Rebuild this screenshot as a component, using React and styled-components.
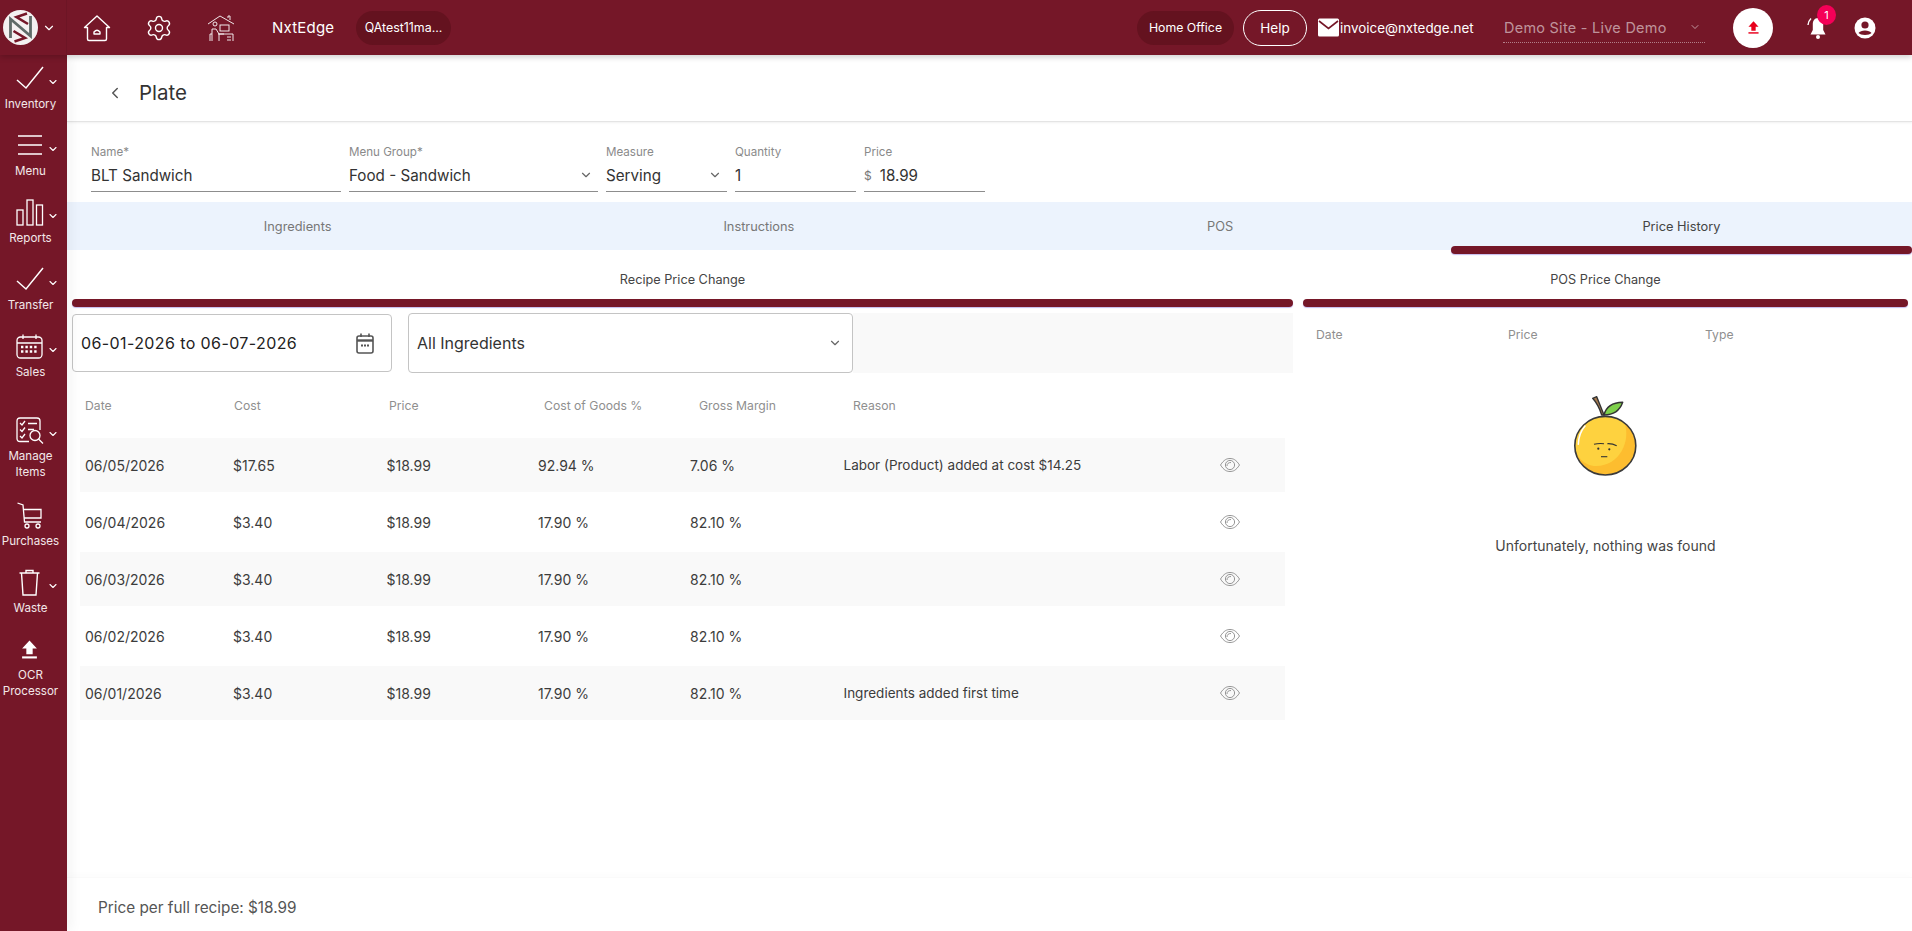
import React from "react";
import styled, { createGlobalStyle } from "styled-components";
import { ChevronDown, ChevronLeft, Settings } from "lucide-react";

const GlobalStyle = createGlobalStyle`
  html, body { margin: 0; padding: 0; height: 100%; background: #fff; }
  #root { height: 100%; }
  * { box-sizing: border-box; }
  body { font-family: "Inter", "Liberation Sans", sans-serif; color: #333; overflow: hidden; }
`;

const MAROON = "#751728";

const Page = styled.div`
  width: 1912px;
  height: 931px;
  display: grid;
  grid-template-columns: 67px 1fr;
  grid-template-rows: 55px 1fr;
`;

const TopBar = styled.header`
  grid-column: 1 / 3;
  background: ${MAROON};
  color: #fff;
  display: flex;
  align-items: center;
  box-shadow: 0 2px 6px rgba(0, 0, 0, 0.2);
  z-index: 2;
`;

const LogoBox = styled.div`
  width: 67px;
  height: 55px;
  display: flex;
  align-items: center;
  padding-left: 3px;
  gap: 4px;
  flex: none;
  border-right: 1px solid #6d1525;
`;

const TopIcons = styled.div`
  display: flex;
  align-items: center;
  gap: 34px;
  padding-left: 16px;
  width: 205px;
  flex: none;
`;

const Brand = styled.span`
  font-size: 15px;
  letter-spacing: 0.2px;
  width: 84px;
  flex: none;
`;

const Pill = styled.span`
  background: #64121f;
  border-radius: 17px;
  height: 34px;
  width: ${(p) => p.$w}px;
  display: inline-flex;
  align-items: center;
  justify-content: center;
  font-size: ${(p) => p.$size || 12}px;
  flex: none;
`;

const Spacer = styled.div`
  flex: 1;
`;

const HelpButton = styled.span`
  border: 1px solid #fff;
  border-radius: 18px;
  width: 64px;
  height: 36px;
  display: inline-flex;
  align-items: center;
  justify-content: center;
  font-size: 13.5px;
  margin-left: 9px;
  flex: none;
`;

const MailLink = styled.span`
  display: inline-flex;
  align-items: center;
  gap: 1px;
  font-size: 13.4px;
  margin-left: 11px;
  width: 185px;
  flex: none;
  white-space: nowrap;
`;

const SiteSelect = styled.div`
  width: 202px;
  height: 30px;
  display: flex;
  align-items: center;
  justify-content: space-between;
  padding: 0 4px 0 1px;
  border-bottom: 1px dotted rgba(255, 255, 255, 0.45);
  color: rgba(255, 255, 255, 0.55);
  font-size: 14.4px;
  letter-spacing: 0.3px;
  white-space: nowrap;
  flex: none;
`;

const UploadRound = styled.span`
  width: 40px;
  height: 40px;
  border-radius: 50%;
  background: #fff;
  display: inline-flex;
  align-items: center;
  justify-content: center;
  margin-left: 28px;
  flex: none;
`;

const BellWrap = styled.span`
  position: relative;
  margin-left: 33px;
  display: inline-flex;
  flex: none;
`;

const Badge = styled.span`
  position: absolute;
  top: -11px;
  left: 11px;
  width: 19px;
  height: 20px;
  border-radius: 50%;
  background: #f50057;
  font-size: 11px;
  display: flex;
  align-items: center;
  justify-content: center;
`;

const UserWrap = styled.span`
  display: inline-flex;
  margin-left: 24px;
  margin-right: 36px;
  flex: none;
`;

const SideBar = styled.nav`
  background: ${MAROON};
  color: #fff;
  display: flex;
  flex-direction: column;
  align-items: center;
  padding-top: 7px;
  box-shadow: 4px 0 12px rgba(0, 0, 0, 0.05);
  z-index: 1;
`;

const SideItem = styled.div`
  width: 67px;
  height: ${(p) => p.$h || 67}px;
  flex: none;
  display: flex;
  flex-direction: column;
  align-items: center;
`;

const SideIconRow = styled.div`
  position: relative;
  height: 32px;
  width: 67px;
  display: flex;
  align-items: center;
  justify-content: center;
  padding-right: 8px;
`;

const SideCaret = styled(ChevronDown)`
  position: absolute;
  right: 8px;
  top: 14px;
`;

const SideLabel = styled.span`
  font-size: 11.6px;
  line-height: 16px;
  text-align: center;
  color: #f3e7e9;
  margin-top: 2px;
  padding-right: 6px;
  white-space: pre-line;
`;

const Main = styled.main`
  display: flex;
  flex-direction: column;
  min-width: 0;
  height: 876px;
`;

const Header = styled.div`
  height: 67px;
  display: flex;
  align-items: center;
  padding: 9px 0 0 39px;
  gap: 15px;
  border-bottom: 1px solid #e4e4e4;
  box-shadow: 0 1px 2px rgba(0, 0, 0, 0.06);
  flex: none;
`;

const Title = styled.h1`
  margin: 0;
  font-size: 20.5px;
  font-weight: 400;
  color: #333;
`;

const FormRow = styled.div`
  height: 80px;
  padding: 24px 0 0 24px;
  display: flex;
  gap: 8px;
  flex: none;
`;

const Field = styled.div`
  width: ${(p) => p.$w}px;
  flex: none;
`;

const FieldLabel = styled.div`
  font-size: 11.6px;
  line-height: 13px;
  color: #8a8a8a;
`;

const FieldValue = styled.div`
  height: 31px;
  margin-top: 2px;
  border-bottom: 1px solid #8d8d8d;
  font-size: 15.2px;
  color: #333;
  display: flex;
  align-items: center;
  justify-content: ${(p) => (p.$start ? "flex-start" : "space-between")};
  padding-right: 5px;
  padding-bottom: 2px;
`;

const Prefix = styled.span`
  color: #777;
  font-size: 12px;
  margin-right: 8px;
`;

const Tabs = styled.div`
  height: 48px;
  background: #ecf3fd;
  display: grid;
  grid-template-columns: repeat(4, 1fr);
  flex: none;
  position: relative;
`;

const Tab = styled.div`
  position: relative;
  display: flex;
  align-items: center;
  justify-content: center;
  padding-top: 1px;
  font-size: 12.8px;
  color: ${(p) => (p.$active ? "#444" : "#777")};
  &::after {
    content: "";
    display: ${(p) => (p.$active ? "block" : "none")};
    position: absolute;
    left: 0;
    right: 0;
    bottom: -4px;
    height: 8px;
    border-radius: 4px;
    background: ${MAROON};
    box-shadow: 0 1px 1px rgba(90, 60, 200, 0.35);
  }
`;

const Body = styled.div`
  flex: 1;
  display: grid;
  grid-template-columns: 1221px 1fr;
  column-gap: 10px;
  padding-left: 5px;
  min-height: 0;
`;

const SubTab = styled.div`
  height: 57px;
  padding-top: 22px;
  text-align: center;
  font-size: 12.7px;
  color: #444;
  line-height: 16px;
  position: relative;
  &::after {
    content: "";
    position: absolute;
    left: 0;
    right: 0;
    bottom: 0;
    height: 8px;
    border-radius: 4px;
    background: ${MAROON};
    box-shadow: 0 1px 1px rgba(90, 60, 200, 0.35);
  }
`;

const FilterRow = styled.div`
  display: flex;
  align-items: flex-start;
  gap: 16px;
  background: linear-gradient(90deg, #fff 0, #fff 781px, #f9f9f9 781px);
  margin-top: 6px;
  height: 60px;
`;

const DateBox = styled.div`
  width: 320px;
  height: 58px;
  margin-top: 1px;
  background: #fff;
  border: 1px solid #c4c4c4;
  border-radius: 4px;
  display: flex;
  align-items: center;
  justify-content: space-between;
  padding: 0 16px 0 8px;
  font-size: 16px;
  letter-spacing: 0.4px;
  color: #222;
`;

const SelectBox = styled.div`
  width: 445px;
  height: 60px;
  background: #fff;
  border: 1px solid #c4c4c4;
  border-radius: 4px;
  display: flex;
  align-items: center;
  justify-content: space-between;
  padding: 0 10px 0 8px;
  font-size: 16px;
  color: #333;
`;

const TableWrap = styled.div`
  padding: 0 8px;
`;

const HeadRow = styled.div`
  height: 65px;
  display: grid;
  grid-template-columns: 149px 155px 155px 155px 154px 1fr;
  align-items: center;
  padding-left: 5px;
  font-size: 12.2px;
  color: #8f8f8f;
`;

const DataRow = styled.div`
  display: grid;
  grid-template-columns: 148px 153.5px 151.5px 152px 153.5px 360px 1fr;
  align-items: center;
  padding-left: 5px;
  height: 54px;
  margin-bottom: 3px;
  font-size: 14px;
  color: #3c3c3c;
  background: ${(p) => (p.$odd ? "#f9f9f9" : "#fff")};
`;

const EyeCell = styled.span`
  display: flex;
  justify-content: flex-end;
  padding-right: 45px;
`;

const ReasonCell = styled.span`
  font-size: 13.5px;
  white-space: nowrap;
`;

const PosPane = styled.div`
  padding-right: 4px;
`;

const PosHead = styled.div`
  display: grid;
  grid-template-columns: 192px 197px 1fr;
  padding: 0 0 0 13px;
  height: 55px;
  align-items: center;
  font-size: 12.2px;
  color: #8f8f8f;
`;

const Empty = styled.div`
  display: flex;
  flex-direction: column;
  align-items: center;
  margin-top: 34px;
`;

const EmptyText = styled.p`
  margin: 61px 0 0;
  font-size: 14px;
  color: #444;
`;

const Footer = styled.footer`
  height: 54px;
  box-shadow: 0 -4px 6px rgba(0, 0, 0, 0.012);
  border-top: 1px solid #fafafa;
  display: flex;
  align-items: center;
  padding: 5px 0 0 31px;
  font-size: 15.3px;
  color: #555;
  flex: none;
`;

const Logo = () => (
  <svg width="35" height="35" viewBox="0 0 35 35">
    <circle cx="17.5" cy="17.5" r="17.5" fill="#f4f1f1" />
    <path d="M24 3.5 L13.5 7 L25 14 M10.5 21 L22 28 L11.5 31.5" fill="none" stroke={MAROON} strokeWidth="2.6" />
    <path d="M7.5 28 V9 L27.5 26 V6" fill="none" stroke="#5f6b68" strokeWidth="2.8" />
  </svg>
);

const HomeIcon = () => (
  <svg width="28" height="28" viewBox="0 0 28 28" fill="none" stroke="#fff" strokeWidth="1.4" strokeLinejoin="round">
    <path d="M1.5 13.5 L14 2 L26.5 13.5 H23.5 V25 Q23.5 26.5 22 26.5 H6 Q4.5 26.5 4.5 25 V13.5 Z" />
    <path d="M11 20 V18 Q14 14.5 17 18 V20 Z" />
  </svg>
);

const DeskHouse = () => (
  <svg width="28" height="28" viewBox="0 0 28 28" fill="none" stroke="#fff" strokeWidth="0.9">
    <path d="M1 10 L13 2 L27 10 M21 4 V2 H23 V6" />
    <circle cx="8" cy="10" r="2" />
    <path d="M5 27 V15 H9 L12 20 H17 M12 20 V27 M5 20 H3 V27" />
    <rect x="13" y="11" width="9" height="6" />
    <path d="M11 20 H26 V27 M20 23 H24 M20 26 H24" />
  </svg>
);

const MailIcon = () => (
  <svg width="21" height="19" viewBox="0 0 21 19">
    <rect x="0" y="0.5" width="21" height="18" rx="1.5" fill="#fff" />
    <path d="M1 3 L10.5 10.5 L20 3" fill="none" stroke={MAROON} strokeWidth="1.6" />
  </svg>
);

const SolidUpload = ({ size, color }) => (
  <svg width={size} height={size} viewBox="0 0 16 18" fill={color}>
    <path d="M8 0.5 L15 8 H11 V13.5 H5 V8 H1 Z" />
    <rect x="1" y="15.5" width="14" height="2" />
  </svg>
);

const BellIcon = () => (
  <svg width="24" height="24" viewBox="0 0 24 24" fill="#fff">
    <path d="M12 2 C8.5 2 6.8 5 6.8 8 V14 L4.5 18.5 H19.5 L17.2 14 V8 C17.2 5 15.5 2 12 2 Z" />
    <circle cx="12" cy="21" r="2" />
    <path d="M5 2.5 C3 4.5 2 6.5 2 9" fill="none" stroke="#fff" strokeWidth="1.4" />
  </svg>
);

const UserIcon = () => (
  <svg width="22" height="22" viewBox="0 0 22 22">
    <circle cx="11" cy="11" r="10.5" fill="#fff" />
    <circle cx="11" cy="8" r="3.6" fill={MAROON} />
    <path d="M4.5 16 C6.5 12.5 15.5 12.5 17.5 16 C15.5 18.5 6.5 18.5 4.5 16 Z" fill={MAROON} />
  </svg>
);

const CheckIcon = () => (
  <svg width="28" height="24" viewBox="0 0 28 24" fill="none" stroke="#fff" strokeWidth="1.5">
    <path d="M1 14 L10 22 L27 1" />
  </svg>
);

const MenuLines = () => (
  <svg width="26" height="22" viewBox="0 0 26 22" fill="none" stroke="#fff" strokeWidth="1.6">
    <path d="M1 2 H25 M1 11 H25 M1 20 H25" />
  </svg>
);

const BarsIcon = () => (
  <svg width="28" height="27" viewBox="0 0 28 27" fill="none" stroke="#fff" strokeWidth="1.3">
    <rect x="1" y="11" width="6" height="15" />
    <rect x="11" y="1" width="6" height="25" />
    <rect x="20.5" y="6" width="6" height="20" />
  </svg>
);

const SalesIcon = () => (
  <svg width="27" height="25" viewBox="0 0 27 25" fill="none" stroke="#fff" strokeWidth="1.3">
    <rect x="1" y="3" width="25" height="21" rx="3.5" />
    <path d="M1 9 H26 M7 0.5 V5 M20 0.5 V5" />
    <path d="M5 13 H22 M5 17.5 H22" strokeWidth="2.6" strokeDasharray="2.4 2" />
  </svg>
);

const ManageIcon = () => (
  <svg width="28" height="27" viewBox="0 0 28 27" fill="none" stroke="#fff" strokeWidth="1.3">
    <path d="M13 24.5 H4 Q1 24.5 1 21.5 V4 Q1 1 4 1 H21 Q24 1 24 4 V13" />
    <path d="M4 6 L6 8 L9 4 M4 12.5 L6 14.5 L9 10.5 M4 19 L6 21 L9 17 M12 6.5 H21 M12 12.5 H18" />
    <circle cx="19" cy="18.5" r="5" />
    <path d="M22.5 22 L27 26.5" />
  </svg>
);

const CartIcon = () => (
  <svg width="25" height="27" viewBox="0 0 25 27" fill="none" stroke="#fff" strokeWidth="1.3">
    <path d="M0.5 1 L6 3 L7.5 20 H24" />
    <path d="M6.2 7.5 H24 V16 H7" />
    <circle cx="10" cy="24" r="2" />
    <circle cx="21" cy="24" r="2" />
  </svg>
);

const WasteIcon = () => (
  <svg width="21" height="27" viewBox="0 0 21 27" fill="none" stroke="#fff" strokeWidth="1.4">
    <path d="M0.5 4 H20.5 M7 4 V1.5 H14 V4" />
    <path d="M2.5 4 L4 26 H17 L18.5 4" />
  </svg>
);

const CalendarIcon = () => (
  <svg width="20" height="21" viewBox="0 0 20 21" fill="none" stroke="#555" strokeWidth="1.6">
    <rect x="2" y="3" width="16" height="17" rx="2" />
    <path d="M2 7.5 H18" strokeWidth="2.4" />
    <path d="M6 0.5 V4 M14 0.5 V4" />
    <path d="M6 12.5 H14" strokeWidth="2" strokeDasharray="2 1" />
  </svg>
);

const EyeIcon = () => (
  <svg width="20" height="14" viewBox="0 0 20 14" fill="none" stroke="#8a8a8a" strokeWidth="0.9">
    <path d="M0.5 7 C4 1.5 7 0.5 10 0.5 C13 0.5 16 1.5 19.5 7 C16 12.5 13 13.5 10 13.5 C7 13.5 4 12.5 0.5 7 Z" />
    <circle cx="10" cy="7" r="4.6" />
    <path d="M7 8 C7 5.5 8.5 4.5 11 4.5" />
  </svg>
);

const Orange = () => (
  <svg width="63" height="80" viewBox="0 0 63 80">
    <path d="M18.7 2.3 L22.7 0.7 L30 19 H27.7 C25.5 12 22 6 18.7 2.3 Z" fill="#a97c50" stroke="#333" strokeWidth="1.4" strokeLinejoin="round" />
    <path d="M30 19 C32 11 39 6.5 48.7 6.3 C46 14 40 19 30 19 Z" fill="#7ed04b" stroke="#333" strokeWidth="1.4" strokeLinejoin="round" />
    <ellipse cx="31.3" cy="49.7" rx="30.5" ry="29.3" fill="#fdbd2f" />
    <path d="M1 49 C1 33 15 20.5 31 20.5 C39 20.5 46 23 50.5 27 C57 44 46 70 22 70 C10 70 1 60 1 49 Z" fill="#fed23f" />
    <ellipse cx="31.3" cy="49.7" rx="30.5" ry="29.3" fill="none" stroke="#3a3a3a" strokeWidth="1.6" />
    <path d="M4.3 48.3 C4.6 40 7 34.5 11 30" stroke="#fff" strokeWidth="1.5" fill="none" strokeLinecap="round" />
    <path d="M20 48.3 C23 47.5 27 47.3 30 47.7 M33.3 47.7 C36.5 47.5 40 48.3 42.7 49.7" stroke="#333" strokeWidth="1.1" fill="none" />
    <circle cx="24.3" cy="52.7" r="1.1" fill="#333" />
    <circle cx="35.3" cy="53.3" r="1.1" fill="#333" />
    <path d="M27 60.7 H33.3" stroke="#333" strokeWidth="1.1" />
  </svg>
);

const sideItems = [
  { label: "Inventory", icon: <CheckIcon />, caret: true },
  { label: "Menu", icon: <MenuLines />, caret: true },
  { label: "Reports", icon: <BarsIcon />, caret: true },
  { label: "Transfer", icon: <CheckIcon />, caret: true },
  { label: "Sales", icon: <SalesIcon />, caret: true, h: 84 },
  { label: "Manage\nItems", icon: <ManageIcon />, caret: true, h: 85 },
  { label: "Purchases", icon: <CartIcon /> },
  { label: "Waste", icon: <WasteIcon />, caret: true },
  { label: "OCR\nProcessor", icon: <SolidUpload size={19} color="#fff" /> },
];

const rows = [
  ["06/05/2026", "$17.65", "$18.99", "92.94 %", "7.06 %", "Labor (Product) added at cost $14.25"],
  ["06/04/2026", "$3.40", "$18.99", "17.90 %", "82.10 %", ""],
  ["06/03/2026", "$3.40", "$18.99", "17.90 %", "82.10 %", ""],
  ["06/02/2026", "$3.40", "$18.99", "17.90 %", "82.10 %", ""],
  ["06/01/2026", "$3.40", "$18.99", "17.90 %", "82.10 %", "Ingredients added first time"],
];

export default function App() {
  return (
    <Page>
      <GlobalStyle />
      <TopBar>
        <LogoBox>
          <Logo />
          <ChevronDown size={14} color="#fff" />
        </LogoBox>
        <TopIcons>
          <HomeIcon />
          <Settings size={28} strokeWidth={1.2} />
          <DeskHouse />
        </TopIcons>
        <Brand>NxtEdge</Brand>
        <Pill $w={95} $size={12.4}>QAtest11ma...</Pill>
        <Spacer />
        <Pill $w={97} $size={12.3}>Home Office</Pill>
        <HelpButton>Help</HelpButton>
        <MailLink>
          <MailIcon />
          invoice@nxtedge.net
        </MailLink>
        <SiteSelect>
          Demo Site - Live Demo
          <ChevronDown size={12} />
        </SiteSelect>
        <UploadRound>
          <SolidUpload size={13} color="#e8001c" />
        </UploadRound>
        <BellWrap>
          <BellIcon />
          <Badge>1</Badge>
        </BellWrap>
        <UserWrap>
          <UserIcon />
        </UserWrap>
      </TopBar>

      <SideBar>
        {sideItems.map((item) => (
          <SideItem key={item.label} $h={item.h}>
            <SideIconRow>
              {item.icon}
              {item.caret && <SideCaret size={12} strokeWidth={2.2} />}
            </SideIconRow>
            <SideLabel>{item.label}</SideLabel>
          </SideItem>
        ))}
      </SideBar>

      <Main>
        <Header>
          <ChevronLeft size={18} color="#555" />
          <Title>Plate</Title>
        </Header>
        <FormRow>
          <Field $w={250}>
            <FieldLabel>Name*</FieldLabel>
            <FieldValue>BLT Sandwich</FieldValue>
          </Field>
          <Field $w={249}>
            <FieldLabel>Menu Group*</FieldLabel>
            <FieldValue>
              Food - Sandwich
              <ChevronDown size={14} color="#666" />
            </FieldValue>
          </Field>
          <Field $w={121}>
            <FieldLabel>Measure</FieldLabel>
            <FieldValue>
              Serving
              <ChevronDown size={14} color="#666" />
            </FieldValue>
          </Field>
          <Field $w={121}>
            <FieldLabel>Quantity</FieldLabel>
            <FieldValue>1</FieldValue>
          </Field>
          <Field $w={121}>
            <FieldLabel>Price</FieldLabel>
            <FieldValue $start>
              <Prefix>$</Prefix>18.99
            </FieldValue>
          </Field>
        </FormRow>
        <Tabs>
          <Tab>Ingredients</Tab>
          <Tab>Instructions</Tab>
          <Tab>POS</Tab>
          <Tab $active>Price History</Tab>
        </Tabs>
        <Body>
          <div>
            <SubTab>Recipe Price Change</SubTab>
            <FilterRow>
              <DateBox>
                06-01-2026 to 06-07-2026
                <CalendarIcon />
              </DateBox>
              <SelectBox>
                All Ingredients
                <ChevronDown size={14} color="#666" />
              </SelectBox>
            </FilterRow>
            <TableWrap>
              <HeadRow>
                <span>Date</span>
                <span>Cost</span>
                <span>Price</span>
                <span>Cost of Goods %</span>
                <span>Gross Margin</span>
                <span>Reason</span>
              </HeadRow>
              {rows.map((r, i) => (
                <DataRow key={r[0]} $odd={i % 2 === 0}>
                  <span>{r[0]}</span>
                  <span>{r[1]}</span>
                  <span>{r[2]}</span>
                  <span>{r[3]}</span>
                  <span>{r[4]}</span>
                  <ReasonCell>{r[5]}</ReasonCell>
                  <EyeCell>
                    <EyeIcon />
                  </EyeCell>
                </DataRow>
              ))}
            </TableWrap>
          </div>
          <PosPane>
            <SubTab>POS Price Change</SubTab>
            <PosHead>
              <span>Date</span>
              <span>Price</span>
              <span>Type</span>
            </PosHead>
            <Empty>
              <Orange />
              <EmptyText>Unfortunately, nothing was found</EmptyText>
            </Empty>
          </PosPane>
        </Body>
        <Footer>Price per full recipe: $18.99</Footer>
      </Main>
    </Page>
  );
}
